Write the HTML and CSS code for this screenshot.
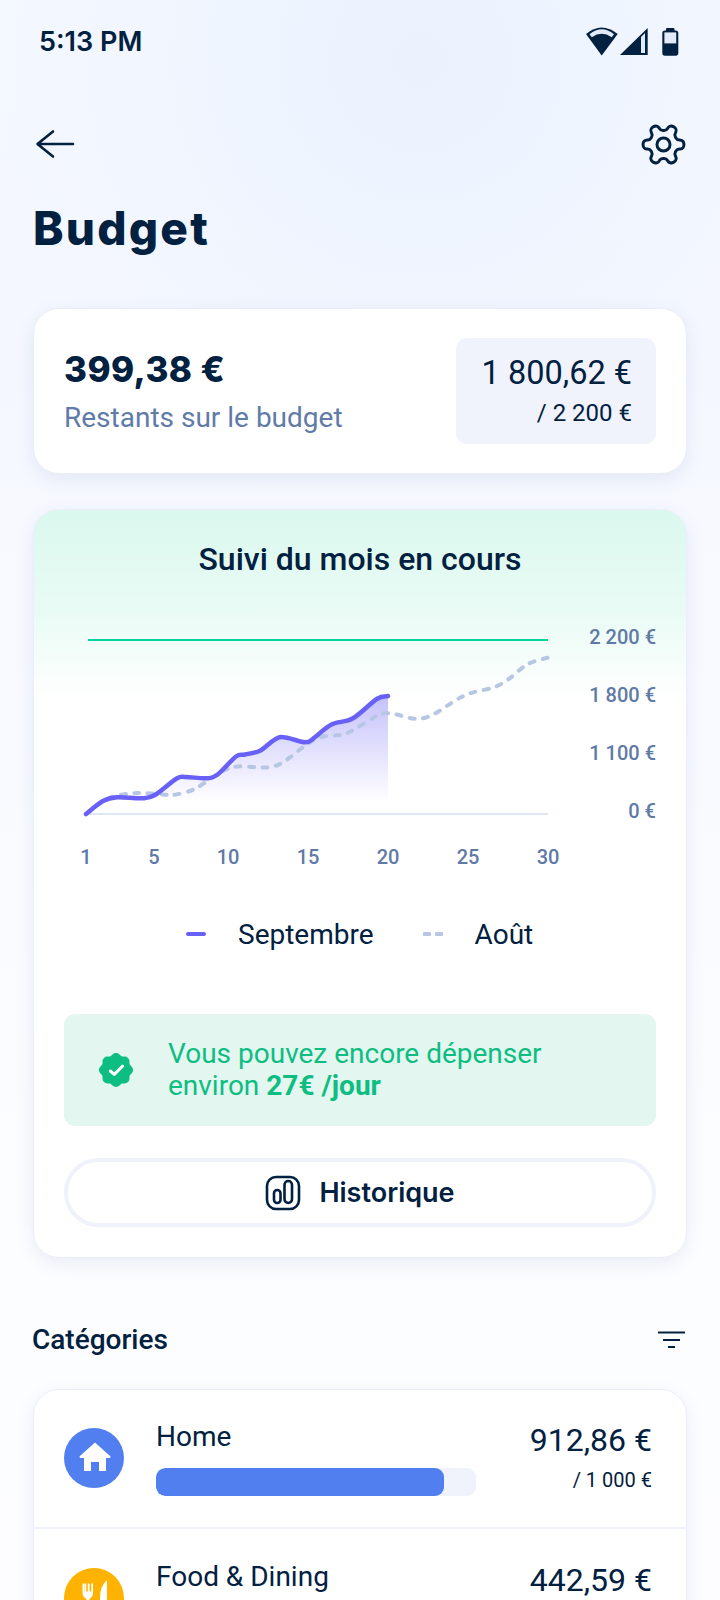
FILE: index.html
```html
<!DOCTYPE html>
<html lang="fr">
<head>
<meta charset="utf-8">
<title>Budget</title>
<link rel="stylesheet" href="styles.css">
</head>
<body>
<div class="page">
  <div class="status">
    <span class="time">5:13 PM</span>
    <svg class="status-icons" viewBox="584 26 96 32" width="96" height="32">
      <path class="navy" d="M586 34Q601.7 21 617.7 34L601.7 55.5Z"/>
      <path class="pale" d="M589.5 34.2Q601.7 24.5 614 34.2L611.7 37.2Q601.7 30.5 591.8 37.2Z"/>
      <path class="navy" d="M620 55L647.7 28V55Z"/>
      <path class="pale" d="M641 37L645 33V53H641Z"/>
      <rect class="navy" x="666" y="28" width="8.5" height="5" rx="1"/>
      <rect class="navy" x="662.3" y="30.5" width="16" height="25.2" rx="2.6"/>
      <rect class="pale" x="664.4" y="32.4" width="11.8" height="11"/>
    </svg>
  </div>

  <div class="nav">
    <svg class="back" viewBox="0 0 40 30" width="40" height="30">
      <path d="M38 15H3M18 2.5L2.5 15L18 27.5"/>
    </svg>
    <svg class="gear" viewBox="0 0 24 24" width="49" height="49">
      <g transform="rotate(90 12 12)">
        <path d="M12.22 2h-.44a2 2 0 0 0-2 2v.18a2 2 0 0 1-1 1.73l-.43.25a2 2 0 0 1-2 0l-.15-.08a2 2 0 0 0-2.73.73l-.22.38a2 2 0 0 0 .73 2.73l.15.1a2 2 0 0 1 1 1.72v.51a2 2 0 0 1-1 1.74l-.15.09a2 2 0 0 0-.73 2.73l.22.38a2 2 0 0 0 2.73.73l.15-.08a2 2 0 0 1 2 0l.43.25a2 2 0 0 1 1 1.73V20a2 2 0 0 0 2 2h.44a2 2 0 0 0 2-2v-.18a2 2 0 0 1 1-1.73l.43-.25a2 2 0 0 1 2 0l.15.08a2 2 0 0 0 2.73-.73l.22-.39a2 2 0 0 0-.73-2.73l-.15-.08a2 2 0 0 1-1-1.74v-.5a2 2 0 0 1 1-1.74l.15-.09a2 2 0 0 0 .73-2.73l-.22-.38a2 2 0 0 0-2.73-.73l-.15.08a2 2 0 0 1-2 0l-.43-.25a2 2 0 0 1-1-1.73V4a2 2 0 0 0-2-2z"/>
        <circle cx="12" cy="12" r="3.2"/>
      </g>
    </svg>
  </div>

  <h1 class="title">Budget</h1>

  <section class="card summary">
    <div>
      <div class="remaining">399,38 €</div>
      <div class="remaining-label">Restants sur le budget</div>
    </div>
    <div class="spent-box">
      <div class="spent">1 800,62 €</div>
      <div class="spent-total">/ 2 200 €</div>
    </div>
  </section>

  <section class="card tracking">
    <h2 class="tracking-title">Suivi du mois en cours</h2>
    <svg class="chart" viewBox="60 620 600 260" width="600" height="260">
      <defs>
        <linearGradient id="area" gradientUnits="userSpaceOnUse" x1="0" y1="696" x2="0" y2="802">
          <stop offset="0" stop-color="#645cf5" stop-opacity=".38"/>
          <stop offset="1" stop-color="#645cf5" stop-opacity="0"/>
        </linearGradient>
      </defs>
      <line class="limit" x1="88" y1="640" x2="548" y2="640"/>
      <line class="base" x1="86" y1="814" x2="548" y2="814"/>
      <path fill="url(#area)" d="M86 814C88.8 811.8 97.8 803.8 103 801C108.2 798.2 110.5 797.75 117 797.3C123.5 796.85 135.7 798.7 142 798.3C148.3 797.9 149.2 798.3 155 795C160.8 791.7 171.5 781.5 176.7 778.5C181.9 775.5 181.1 777 186 777C190.9 777 200.8 778.6 206 778.3C211.2 778 212 778.6 217 775C222 771.4 231.3 759.9 236 756.5C240.7 753.1 241 755.5 245 754.5C249 753.5 254 753.6 260 750.7C266 747.8 274 737.2 281 737C288 736.8 299.6 742.1 305 742.3C310.4 742.5 309.1 741.3 313.5 738.3C317.9 735.3 324.9 727.8 331.5 724.5C338.1 721.2 345.5 722.55 353 718.3C360.5 714.05 370.9 702.7 376.7 699C382.5 695.3 386.1 696.5 388 696V814Z"/>
      <path class="prev" d="M86 814Q103 800 112 797Q122 794 133 793.3Q143 792.7 155 793.8Q167 795 172 795Q177 794.7 184 792.7Q192 790.7 197.5 787.5Q203 784 213 777Q223 770 230 768Q237 765.7 247 766.5Q257 767.3 263.5 767.5Q270 767.7 276.5 765.5Q283 763.3 293 755Q303 746.7 311.5 741.3Q320 736 330 735.8Q340 735.7 346.5 733.2Q353 730.7 365 722.8Q377 715 381 713.8Q385 712.7 390 713.3Q395 714 402.5 716Q410 718.3 415 718.8Q420 719.3 426 717.5Q432 715.7 438.5 711.5Q445 707.3 451 703.3Q457 699.3 462 696.8Q467 694.3 472.5 692.6Q478 691 485 689.6Q492 688.3 497.5 685.8Q503 683.3 508 679.6Q513 676 518 671.3Q523 666.7 528 664Q533 661.3 541 659.5Q545 658.5 548 657.7"/>
      <path class="curr" d="M86 814C88.8 811.8 97.8 803.8 103 801C108.2 798.2 110.5 797.75 117 797.3C123.5 796.85 135.7 798.7 142 798.3C148.3 797.9 149.2 798.3 155 795C160.8 791.7 171.5 781.5 176.7 778.5C181.9 775.5 181.1 777 186 777C190.9 777 200.8 778.6 206 778.3C211.2 778 212 778.6 217 775C222 771.4 231.3 759.9 236 756.5C240.7 753.1 241 755.5 245 754.5C249 753.5 254 753.6 260 750.7C266 747.8 274 737.2 281 737C288 736.8 299.6 742.1 305 742.3C310.4 742.5 309.1 741.3 313.5 738.3C317.9 735.3 324.9 727.8 331.5 724.5C338.1 721.2 345.5 722.55 353 718.3C360.5 714.05 370.9 702.7 376.7 699C382.5 695.3 386.1 696.5 388 696"/>
      <g class="axis-y">
        <text x="656" y="644">2 200 €</text>
        <text x="656" y="702">1 800 €</text>
        <text x="656" y="760">1 100 €</text>
        <text x="656" y="818">0 €</text>
      </g>
      <g class="axis-x">
        <text x="86" y="864">1</text>
        <text x="154" y="864">5</text>
        <text x="228" y="864">10</text>
        <text x="308" y="864">15</text>
        <text x="388" y="864">20</text>
        <text x="468" y="864">25</text>
        <text x="548" y="864">30</text>
      </g>
    </svg>

    <div class="legend">
      <span class="swatch swatch-curr"></span>
      <span class="legend-label legend-label-curr">Septembre</span>
      <span class="swatch-dash"><i></i><i></i></span>
      <span class="legend-label">Août</span>
    </div>

    <div class="notice">
      <svg class="notice-icon" viewBox="0 0 36 36" width="36" height="36">
        <rect class="badge" x="4.5" y="4.5" width="27" height="27" rx="5"/>
        <rect class="badge" x="4.5" y="4.5" width="27" height="27" rx="5" transform="rotate(45 18 18)"/>
        <path class="badge-check" d="M12.3 19L16.3 22.4L24.7 14"/>
      </svg>
      <p class="notice-text">Vous pouvez encore dépenser<br>environ <strong>27€ /jour</strong></p>
    </div>

    <button class="history" type="button">
      <svg class="history-icon" viewBox="0 0 36 36" width="36" height="36">
        <rect x="2" y="2" width="32" height="32" rx="9"/>
        <rect x="9" y="15" width="6.5" height="13" rx="3.25"/>
        <rect x="19.5" y="6" width="7.5" height="22" rx="3.75"/>
      </svg>
      <span>Historique</span>
    </button>
  </section>

  <div class="cat-head">
    <h2 class="cat-title">Catégories</h2>
    <svg class="filter" viewBox="0 0 27 18" width="27" height="18">
      <path d="M0 1.5H27M5 9H22M10 16H17"/>
    </svg>
  </div>

  <section class="card categories">
    <div class="row">
      <svg class="cat-icon" viewBox="0 0 60 60" width="60" height="60">
        <circle class="home-bg" cx="30" cy="30" r="30"/>
        <path class="glyph" d="M31 14.5L46.3 28.3Q47 30 45.4 30H42V43H35V34H27V43H20V30H16.6Q15 30 15.7 28.3Z"/>
      </svg>
      <div class="row-main">
        <div class="row-name">Home</div>
        <div class="track"><div class="fill fill-home" style="width:90%"></div></div>
      </div>
      <div class="row-amounts">
        <div class="amount">912,86 €</div>
        <div class="amount-total">/ 1 000 €</div>
      </div>
    </div>
    <div class="row">
      <svg class="cat-icon" viewBox="0 0 60 60" width="60" height="60">
        <circle class="food-bg" cx="30" cy="30" r="30"/>
        <path class="glyph" d="M18.5 15.5V24.5Q18.5 29.5 22.3 30.7V56H25.3V30.7Q29 29.5 29 24.5V15.5H27.2V23.5H25.6V15.5H23.8V23.5H22.2V15.5H20.3V23.5H20V15.5Z"/>
        <path class="glyph" d="M43 12Q36 18 36 30V38H39V56H43Z"/>
      </svg>
      <div class="row-main">
        <div class="row-name">Food &amp; Dining</div>
        <div class="track"></div>
      </div>
      <div class="row-amounts">
        <div class="amount">442,59 €</div>
        <div class="amount-total"></div>
      </div>
    </div>
  </section>
</div>
</body>
</html>
```

FILE: styles.css
```css
* { box-sizing: border-box; }
html, body { margin: 0; padding: 0; }
body {
  width: 720px;
  height: 1600px;
  overflow: hidden;
  color: #02203f;
  font-family: Roboto, "Liberation Sans", sans-serif;
}
.page {
  height: 1600px;
  overflow: hidden;
  background:
    radial-gradient(ellipse 420px 420px at 420px 60px, #ebf2fe 0%, rgba(235,242,254,0) 100%),
    linear-gradient(180deg, #f4f8ff 0%, #f4f7ff 22%, #f7f9ff 34%, #fcfdff 80%, #fdfdff 100%);
}

/* status */
.status {
  height: 82px;
  margin-bottom: 2px;
  padding: 0 40px 0 39px;
  display: flex;
  align-items: center;
  justify-content: space-between;
}
.time { font-family: Inter, sans-serif; font-weight: 600; font-size: 27px; }
.status-icons { display: block; margin-top: 2px; }
.navy { fill: #02203f; }
.pale { fill: #e3ebf8; }

/* nav */
.nav {
  height: 120px;
  padding: 0 32px 0 35px;
  display: flex;
  align-items: center;
  justify-content: space-between;
}
.back path { fill: none; stroke: #02203f; stroke-width: 2.6; stroke-linecap: round; stroke-linejoin: round; }
.gear path, .gear circle { fill: none; stroke: #02203f; stroke-width: 1.45; }
.title {
  margin: 0 0 57px;
  padding: 1px 0 0 33px;
  font-family: Inter, sans-serif;
  font-weight: 800;
  font-size: 46px;
  line-height: 46px;
  letter-spacing: 2.2px;
}

/* cards */
.card {
  margin: 0 33px;
  background: #fff;
  border: 1px solid #eaeef8;
  border-radius: 26px;
  box-shadow: 0 6px 18px rgba(70, 95, 160, .1);
}
.summary {
  height: 166px;
  padding: 0 30px;
  display: flex;
  align-items: center;
  justify-content: space-between;
}
.remaining { font-family: Inter, sans-serif; font-weight: 800; font-size: 35px; line-height: 42px; letter-spacing: .4px; }
.remaining-label { color: #5f7ba8; font-size: 28px; line-height: 34px; margin-top: 11px; }
.spent-box {
  width: 200px;
  height: 106px;
  padding: 17px 24px 0 0;
  background: #f0f3fb;
  border-radius: 11px;
  text-align: right;
}
.spent { font-size: 32.5px; line-height: 36px; }
.spent-total { font-size: 24px; line-height: 28px; margin-top: 8px; }

.tracking {
  height: 749px;
  margin-top: 35px;
  padding: 30px 30px 0;
  background: linear-gradient(180deg, #daf8ee 0, #e9fbf5 100px, #fff 190px);
}
.tracking-title { margin: 0; font-size: 32px; font-weight: 500; line-height: 38px; text-align: center; }
.chart { display: block; margin: 42px 0 0 -4px; overflow: visible; }
.limit { stroke: #00d69b; stroke-width: 2; }
.base { stroke: #dfe7f5; stroke-width: 2; }
.prev { fill: none; stroke: #b7c7e3; stroke-width: 4; stroke-linecap: round; stroke-dasharray: 5 8.5; }
.curr { fill: none; stroke: #6860f7; stroke-width: 4.5; stroke-linecap: round; }
.axis-y text, .axis-x text { fill: #5f7aa6; font-family: Roboto, sans-serif; font-weight: 500; font-size: 20px; }
.axis-y text { text-anchor: end; }
.axis-x text { text-anchor: middle; }

.legend {
  height: 40px;
  margin-top: 34px;
  padding-left: 122px;
  display: flex;
  align-items: center;
}
.swatch { width: 20px; height: 4px; border-radius: 2px; }
.swatch-curr { background: #6860f7; }
.swatch-dash { width: 20px; display: flex; justify-content: space-between; }
.swatch-dash i { width: 8px; height: 4px; border-radius: 1px; background: #b7c7e3; }
.legend-label { margin-left: 32px; font-size: 28px; }
.legend-label-curr { margin-right: 49px; }

.notice {
  height: 112px;
  margin-top: 60px;
  padding-left: 34px;
  display: flex;
  align-items: center;
  background: #e3f7f0;
  border-radius: 11px;
}
.notice-icon { flex: none; }
.badge { fill: #0dbd82; }
.badge-check { fill: none; stroke: #fff; stroke-width: 3; stroke-linecap: round; stroke-linejoin: round; }
.notice-text { margin: 0 0 0 34px; color: #0dbd82; font-size: 28px; line-height: 32px; }
.notice-text strong { font-weight: 700; }

.history {
  width: 100%;
  height: 69px;
  margin-top: 32px;
  display: flex;
  align-items: center;
  justify-content: center;
  gap: 18px;
  background: #fff;
  color: #02203f;
  border: 4px solid #eff2fa;
  border-radius: 35px;
  font-family: Inter, sans-serif;
  font-weight: 600;
  font-size: 27px;
}
.history-icon rect { fill: none; stroke: #02203f; stroke-width: 2.6; }

/* categories */
.cat-head {
  height: 40px;
  margin-top: 62px;
  padding: 0 35px 0 32px;
  display: flex;
  align-items: center;
  justify-content: space-between;
}
.cat-title { margin: 0; font-size: 28px; font-weight: 500; line-height: 40px; }
.filter path { fill: none; stroke: #02203f; stroke-width: 2.2; }
.categories { margin-top: 29px; }
.row {
  height: 139px;
  padding: 0 34px 0 30px;
  display: flex;
  align-items: center;
  border-bottom: 2px solid #eff2fa;
}
.row:first-child { padding-bottom: 2px; }
.cat-icon { flex: none; }
.home-bg { fill: #527ff0; }
.food-bg { fill: #ffb300; }
.glyph { fill: #fff; }
.row-main { width: 320px; margin-left: 32px; }
.row-name { font-size: 28px; line-height: 34px; }
.track { height: 28px; margin-top: 14px; background: #f0f3fb; border-radius: 9px; overflow: hidden; }
.fill { height: 100%; border-radius: 9px; }
.fill-home { background: #527ff0; }
.row-amounts { margin-left: auto; text-align: right; }
.amount { font-size: 32px; line-height: 36px; }
.amount-total { font-size: 20px; line-height: 28px; min-height: 28px; margin-top: 8px; }
```
